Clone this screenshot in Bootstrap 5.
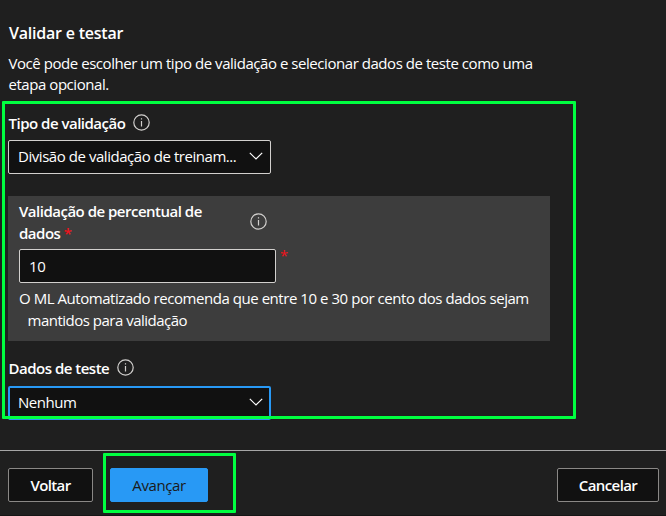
<!DOCTYPE html>
<html lang="pt-BR">
<head>
<meta charset="utf-8">
<meta name="viewport" content="width=device-width, initial-scale=1">
<title>Validar e testar</title>
<link rel="stylesheet" href="https://cdn.jsdelivr.net/npm/bootstrap@5.3.0/dist/css/bootstrap.min.css">
<style>
  body { background: #1f1f1f; color: #fff; font: 15px/22px "Open Sans", "Noto Sans", sans-serif; height: 516px; overflow: hidden; letter-spacing: -.45px; border-bottom: 1px solid #151515; }
  .form-area { height: 450px; padding: 22px 8px 0; }
  .title { font-size: 16px; font-weight: 600; line-height: 22px; margin-bottom: 9px; letter-spacing: -.22px; padding-left: 1px; }
  .intro { line-height: 21px; width: 550px; margin-bottom: 17px; padding-left: .5px; }
  .field-label { font-weight: 600; letter-spacing: -.5px; }
  .outer-label { padding-left: .5px; }
  .picker, .entry { height: 34px; background: #111; border: 1px solid #d2d0ce; border-radius: 2px; color: #fff; }
  .picker { width: 263px; padding: 0 7px 2px 9px; margin-top: 6px; }
  .picker.active { border: 2px solid #2899f5; padding: 0 6px 2px 8px; margin-top: 7px; }
  .panel { width: 542px; height: 145px; background: #3d3d3d; margin: 22px 0 16px; padding: 4px 11px 0; }
  .panel-head { width: 248px; margin-bottom: 5px; }
  .entry { width: 257px; padding: 0 9px; font: inherit; letter-spacing: inherit; }
  .hint { margin-top: 4px; }
  .hint-next { padding-left: 8.5px; letter-spacing: -.5px; }
  .req { color: #f1131b; }
  .req-side { margin-left: 4px; line-height: 13px; }
  .actions { border-top: 1px solid #a6a6a6; padding: 17px 7px 0 8px; }
  .cmd { --bs-btn-border-radius: 2px; height: 34px; padding: 0; font-size: 15px; line-height: 32px; font-weight: 600; letter-spacing: -.6px; color: #fff; background: #111; border: 1px solid #8a8886; }
  .cmd-next { background: #2899f5; border-color: #2899f5; color: #1b1a19; font-weight: 400; letter-spacing: -.4px; margin-left: 17px; width: 98px; }
  .cmd-back { width: 85px; }
  .cmd-cancel { width: 102px; }
  .frame { position: absolute; border: 3px solid #00ff40; border-radius: 1px; pointer-events: none; }
  .frame-form { left: 2px; top: 101px; width: 574px; height: 318px; }
  .frame-next { left: 103px; top: 453px; width: 133px; height: 60px; }
  svg { display: block; flex: none; }
  .info { margin-bottom: 1px; }
</style>
<script src="https://cdn.jsdelivr.net/npm/bootstrap@5.3.0/dist/js/bootstrap.bundle.min.js"></script>
</head>
<body class="position-relative">
<svg class="d-none">
  <symbol id="info" viewBox="0 0 17 17"><circle cx="8.5" cy="8.5" r="7.7" fill="none" stroke="#d2d0ce" stroke-width="1.2"/><path d="M8.5 7v5.5M8.5 4.3v1.3" fill="none" stroke="#d2d0ce" stroke-width="1.2"/></symbol>
  <symbol id="chevron" viewBox="0 0 14 8"><path d="M.8.8 7 7 13.2.8" fill="none" stroke="currentColor" stroke-width="1.2"/></symbol>
</svg>
<main class="form-area">
  <h1 class="title">Validar e testar</h1>
  <p class="intro">Você pode escolher um tipo de validação e selecionar dados de teste como uma<br>etapa opcional.</p>

  <div class="d-flex align-items-center gap-2"><span class="field-label outer-label">Tipo de validação</span><svg class="info" width="17" height="17"><use href="#info"/></svg></div>
  <div class="picker d-flex align-items-center justify-content-between"><span>Divisão de validação de treinam...</span><svg width="14" height="8"><use href="#chevron"/></svg></div>

  <section class="panel">
    <div class="panel-head d-flex align-items-center justify-content-between">
      <label class="field-label" for="percent">Validação de percentual de<br>dados <span class="req">*</span></label>
      <svg class="info" width="17" height="17"><use href="#info"/></svg>
    </div>
    <div class="d-flex"><input class="entry" id="percent" value="10"><span class="req req-side">*</span></div>
    <div class="hint"><div class="text-nowrap">O ML Automatizado recomenda que entre 10 e 30 por cento dos dados sejam</div><div class="hint-next">mantidos para validação</div></div>
  </section>

  <div class="d-flex align-items-center gap-2"><span class="field-label outer-label">Dados de teste</span><svg class="info" width="17" height="17"><use href="#info"/></svg></div>
  <div class="picker active d-flex align-items-center justify-content-between"><span>Nenhum</span><svg width="14" height="8"><use href="#chevron"/></svg></div>
</main>
<footer class="actions d-flex">
  <button class="btn cmd cmd-back" type="button">Voltar</button>
  <button class="btn cmd cmd-next" type="button">Avançar</button>
  <button class="btn cmd cmd-cancel ms-auto" type="button">Cancelar</button>
</footer>
<div class="frame frame-form"></div>
<div class="frame frame-next"></div>
</body>
</html>
